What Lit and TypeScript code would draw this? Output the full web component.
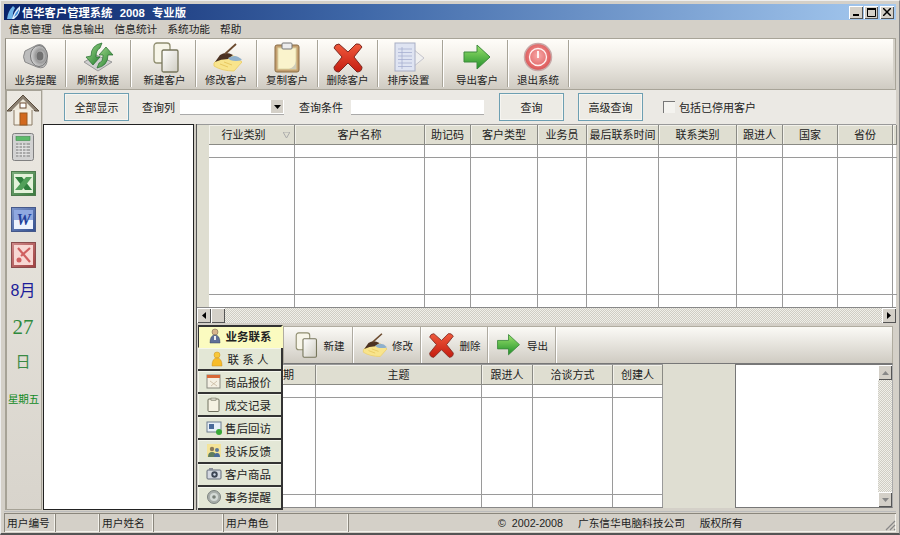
import { LitElement, html, css, svg } from "lit";
import { customElement } from "lit/decorators.js";

const grad = (id: string, a: string, b: string) => svg`<defs><linearGradient id=${id} x1="0" y1="0" x2="1" y2="1"><stop offset="0" stop-color=${a}/><stop offset="1" stop-color=${b}/></linearGradient></defs>`;

const icons: Record<string, any> = {
  speaker: svg`<defs><radialGradient id="sp" cx=".6" cy=".5" r=".6"><stop offset="0" stop-color="#f4f4f4"/><stop offset=".5" stop-color="#9a9a9a"/><stop offset="1" stop-color="#dcdcdc"/></radialGradient></defs>
    <path d="M5 9 L17 3 Q24 1 26 9 L27 20 Q25 28 17 25 L5 20 Q2 15 5 9Z" fill="#bdbdbd" stroke="#8a8a8a"/><ellipse cx="19" cy="14" rx="8.500" ry="10.500" fill="url(#sp)" stroke="#777"/><ellipse cx="20" cy="14" rx="3.500" ry="4.500" fill="#707070"/>`,
  refresh: svg`${grad("rf", "#a4dc8e", "#1e7a2a")}<path d="M2 20 L14 13 L30 20 L16 29Z" fill="#cfcfcf" stroke="#999"/><path d="M9 14 Q9 3 20 1 L18 6 Q14 8 14 15 L18 15 L11 23 L4 15Z" fill="url(#rf)" stroke="#236b2c" stroke-width=".7"/><path d="M26 13 Q26 24 15 26 L17 21 Q21 20 21 13 L17 13 L24 5 L31 13Z" fill="url(#rf)" stroke="#236b2c" stroke-width=".7"/>`,
  doc: svg`${grad("dc", "#ffffff", "#cfcdc2")}<rect x="5" y="1" width="16" height="20" rx="3" fill="#f7f5e8" stroke="#8f8d6f" stroke-width="1.300"/><rect x="13" y="8" width="16" height="22" rx="1.500" fill="url(#dc)" stroke="#77765c" stroke-width="1.300"/>`,
  edit: svg`<g transform="translate(2 0)"><path d="M2 21 L9 14 L22 14 L30 20 L22 29 Q10 29 2 24Z" fill="#f8e48c" stroke="#ecd070"/><path d="M8 22l8 3M12 20l8 3" stroke="#e8c860" fill="none"/><path d="M3 20 L8 13 Q14 9 21 13 L16 17 Q9 17 3 20Z" fill="#4c3222"/><path d="M13 12 L24 2" stroke="#6b4a2e" stroke-width="1.800"/><path d="M16 16 Q24 11 30 18 Q24 20 18 18Z" fill="#8fb0cc"/></g>`,
  clip: svg`<rect x="4" y="3" width="24" height="27" rx="2" fill="#c4a070" stroke="#8a6c44"/><rect x="7" y="6" width="18" height="21" fill="#faf3cc" stroke="#e0d8a8"/><rect x="11" y="1" width="10" height="6" rx="1" fill="#ececec" stroke="#777"/><path d="M18 27 Q24 25 25 19 L25 27Z" fill="#cfcdb8"/>`,
  del: svg`<defs><linearGradient id="dl" x1="0" y1="0" x2="0" y2="1"><stop offset="0" stop-color="#f05a3c"/><stop offset="1" stop-color="#c41c10"/></linearGradient></defs><path d="M7 2 L16 10 L24 2 Q28 1 30 5 L22 15 L30 25 Q30 30 25 30 L16 21 L7 30 Q2 30 2 25 L10 15 L2 6 Q3 2 7 2Z" fill="url(#dl)" stroke="#7c2a22"/>`,
  sort: svg`<path d="M20 7 L31 16 L20 25Z" fill="#f0f0f0" stroke="#c4c4cc"/><rect x="2" y="1" width="20" height="28" fill="#dfe4f2" stroke="#a8aec4"/><path d="M5 7H19M5 10.500H19M5 14H19M5 17.500H19M5 21H19M5 24.500H19M9 5V27" stroke="#a6aed0" stroke-width=".8"/>`,
  arrow: svg`<defs><linearGradient id="ar" x1="0" y1="0" x2="0" y2="1"><stop offset="0" stop-color="#9be36c"/><stop offset="1" stop-color="#1f8f2a"/></linearGradient></defs><path d="M3 10 H16 V3 L29 15 L16 27 V20 H3Z" fill="url(#ar)" stroke="#3c8a3c"/>`,
  exit: svg`<defs><radialGradient id="ex" cx=".5" cy=".45" r=".6"><stop offset="0" stop-color="#f8a8a8"/><stop offset="1" stop-color="#d84c4c"/></radialGradient></defs><circle cx="16" cy="15" r="13.500" fill="url(#ex)" stroke="#c8a8a8" stroke-width="1.500"/><circle cx="16" cy="15" r="8.500" fill="none" stroke="#fff2f2" stroke-width="1.300"/><path d="M16 9 V16" stroke="#fff2f2" stroke-width="2"/>`,
  house: svg`<path d="M8 16 H26 V32 H8Z" fill="#f4efe4" stroke="#8a7a65"/><path d="M1 18 L17 2 L33 18 L29 18 L17 7 L5 18Z" fill="#8a7f70" stroke="#5a4c3c"/><path d="M17 6 L28 17 H6Z" fill="#ece6d8"/><rect x="14" y="10" width="6" height="5" fill="#fff" stroke="#6b4a30"/><rect x="14" y="20" width="7" height="12" fill="#d2691e" stroke="#9a5a20"/>`,
  calc: svg`<rect x="1.500" y=".5" width="21" height="27" rx="2" fill="#d2d2d2" stroke="#808080"/><rect x="5" y="3.500" width="14" height="4" fill="#5dbb6a" stroke="#3e8a4c" stroke-width=".6"/><path d="M5 10H19V24H5Z" fill="#a8a8a8"/><path d="M5 12.500H19M5 15.500H19M5 18.500H19M5 21.500H19M8 10V24M11.500 10V24M15 10V24" stroke="#e4e4e4" stroke-width=".9"/>`,
  excel: svg`<defs><linearGradient id="xl" x1="0" y1="0" x2="1" y2="1"><stop offset="0" stop-color="#7cae7c"/><stop offset="1" stop-color="#3c7a40"/></linearGradient></defs><rect x=".5" y=".5" width="24" height="24" fill="url(#xl)" stroke="#4c7a4c"/><rect x="3" y="3" width="19" height="19" fill="#e4f2da"/><path d="M4 6 H11 L21 19 H14Z" fill="#2f7f3e"/><path d="M21 6 H15 L4 19 H11Z" fill="#52a05a"/>`,
  word: svg`<defs><linearGradient id="wd" x1="0" y1="0" x2="1" y2="1"><stop offset="0" stop-color="#7f97cc"/><stop offset="1" stop-color="#34508f"/></linearGradient></defs><rect x=".5" y=".5" width="24" height="24" fill="url(#wd)" stroke="#46598a"/><rect x="3" y="3" width="19" height="19" fill="#eef3fd"/><path d="M3 3 H22 V13 H3Z" fill="#8fa8e0"/><text x="12.500" y="18" text-anchor="middle" font-size="16" font-weight="bold" font-style="italic" font-family="Liberation Serif, serif" fill="#23409a">W</text>`,
  ppt: svg`<defs><linearGradient id="pp" x1="0" y1="0" x2="1" y2="1"><stop offset="0" stop-color="#d08a8a"/><stop offset="1" stop-color="#a04040"/></linearGradient></defs><rect x=".5" y=".5" width="24" height="25" fill="url(#pp)" stroke="#8a4c4c"/><rect x="3" y="3" width="19" height="20" fill="#f8d8d4"/><path d="M7 6 L19 20 M19 6 L10 14" stroke="#d06060" stroke-width="2.200"/><circle cx="8" cy="18" r="2.500" fill="#d06060"/>`,
  person: svg`<circle cx="8" cy="4" r="3" fill="#d8b48c" stroke="#6b5a45" stroke-width=".5"/><path d="M3 15 Q3 7 8 7 Q13 7 13 15Z" fill="#5f6f98" stroke="#3a4460" stroke-width=".5"/><path d="M7 8h2v4H7z" fill="#eee"/>`,
  yellow: svg`<circle cx="8" cy="4" r="3" fill="#f8c83c" stroke="#c89020" stroke-width=".5"/><path d="M3 15 Q3 7 8 7 Q13 7 13 15Z" fill="#f8bc28" stroke="#c89020" stroke-width=".5"/>`,
  cal: svg`<rect x="1" y="1" width="13" height="13" fill="#f4f0e4" stroke="#8a8a80"/><rect x="1" y="1" width="13" height="3" fill="#d86838"/><path d="M4 7l7 5M11 7l-6 5" stroke="#c8b8a0" stroke-width=".8"/>`,
  board: svg`<rect x="2" y="2" width="11" height="12.500" rx="1" fill="#f5f2e2" stroke="#70705e"/><rect x="5" y="1" width="5" height="2.500" fill="#cfcfc0" stroke="#70705e" stroke-width=".5"/>`,
  monitor: svg`<rect x="1" y="2" width="14" height="10" fill="#e8f0f8" stroke="#6f7f8f"/><rect x="3" y="4" width="5" height="5" fill="#4a6a9a"/><circle cx="13" cy="12" r="3" fill="#38a838"/>`,
  group: svg`<rect x="1" y="1" width="14" height="13" fill="#f4e498"/><circle cx="6" cy="6" r="2.200" fill="#8a7a58"/><path d="M2 14 Q2 9 6 9 Q10 9 10 14Z" fill="#5f7d5f"/><circle cx="11" cy="7" r="2" fill="#58789a"/><path d="M8 14 Q8 10 11 10 Q14 10 14 14Z" fill="#4a6c9a"/>`,
  camera: svg`<rect x="1" y="4" width="14" height="9" rx="1" fill="#d4d8e0" stroke="#646c7a"/><rect x="3" y="2" width="4" height="2" fill="#8a8f9a"/><circle cx="8.500" cy="8.500" r="3.200" fill="#3c4454"/><circle cx="8.500" cy="8.500" r="1.200" fill="#cfd8e8"/>`,
  disc: svg`<circle cx="8" cy="8" r="6.500" fill="#a8aeaa" stroke="#7d8480"/><circle cx="8" cy="8" r="4" fill="#d4dad6"/><circle cx="8" cy="8" r="1.800" fill="#788078"/>`,
  logo: svg`<path d="M1 14 Q2 6 7 1 L9 3 Q6 8 7 14Z" fill="#6fb4e8"/><path d="M6 14 Q8 6 14 1 Q15 9 8 14Z" fill="#dff0fc"/><path d="M8 12 Q10 7 13 4 Q13 9 8 12Z" fill="#3f8ad8"/>`,
};

const ic = (name: string, w: number, h: number, vw = w, vh = h) =>
  html`<svg class="ic" width=${w} height=${h} viewBox="0 0 ${vw} ${vh}">${icons[name]}</svg>`;

const mainBtns: [string, string, number, number][] = [
  ["speaker", "业务提醒", 60, 0], ["refresh", "刷新数据", 65, 0], ["doc", "新建客户", 65, 3], ["edit", "修改客户", 61, 0],
  ["clip", "复制客户", 61, 0], ["del", "删除客户", 60, 0], ["sort", "排序设置", 65, -3], ["arrow", "导出客户", 65, 4], ["exit", "退出系统", 61, 0],
];
const menus = ["信息管理", "信息输出", "信息统计", "系统功能", "帮助"];
const grid1 = ["行业类别", "客户名称", "助记码", "客户类型", "业务员", "最后联系时间", "联系类别", "跟进人", "国家", "省份"];
const grid2 = ["期", "主题", "跟进人", "洽谈方式", "创建人"];
const tabs: [string, string][] = [
  ["person", "业务联系"], ["yellow", "联 系 人"], ["cal", "商品报价"], ["board", "成交记录"],
  ["monitor", "售后回访"], ["group", "投诉反馈"], ["camera", "客户商品"], ["disc", "事务提醒"],
];
const sub: [string, string, number][] = [["doc", "新建", 69], ["edit", "修改", 68], ["del", "删除", 67], ["arrow", "导出", 68]];

@customElement("app-root")
export class AppRoot extends LitElement {
  static styles = css`
    :host { display: block; width: 900px; height: 535px; overflow: hidden; }
    * { box-sizing: border-box; }
    .win { width: 900px; height: 535px; background: #d4d0c8; padding: 3px 3px 1px 3px; display: flex; flex-direction: column;
      font: 11px "Liberation Sans", "Noto Sans CJK SC", sans-serif; color: #222; border-right: 1px solid #888; border-bottom: 2px solid #555; border-top: 1px solid #eee; border-left: 1px solid #eee; }
    .ic { display: block; flex: none; }
    .title { height: 16px; flex: none; background: linear-gradient(90deg, #0a246a 0%, #3f68a8 40%, #a6caf0 100%); color: #fff; font-weight: 700; font-size: 11.300px; display: flex; align-items: center; padding-left: 2px; gap: 1px; white-space: pre; word-spacing: .5px; }
    .wbtns { margin-left: auto; display: flex; padding-right: 2px; }
    .wb { width: 14px; height: 13px; margin-left: 1px; background: #d4d0c8; box-shadow: inset 1px 1px #fff, inset -1px -1px #555; display: flex; align-items: center; justify-content: center; }
    .wb:last-child { margin-left: 2px; }
    .menu { height: 17px; flex: none; display: flex; align-items: center; padding-left: 5px; gap: 10px; font-size: 10.700px; }
    .tb { height: 52px; flex: none; margin: 1px 0 0 1px; border: 1px solid #a8a498; border-left-color: #8f8b80; background: linear-gradient(#fffdf9 0%, #f3f0ea 35%, #cfcbc2 100%); display: flex; padding: 1px 0 0 0; box-shadow: inset -2px 0 #d4d0c8; }
    .tbtn { display: flex; flex-direction: column; align-items: center; justify-content: space-between; padding: 2px 0 1px; border-right: 1px solid #a8a498; box-shadow: 1px 0 #fff; height: 47px; font-size: 10.500px; line-height: 12px; }
    .w { flex: 1; display: flex; min-height: 0; }
    .rail { width: 37px; flex: none; margin-left: 1px; border: 1px solid #a6a296; border-left-width: 2px; background: linear-gradient(#ece9e2, #d8d4cc); display: flex; flex-direction: column; align-items: center; padding: 2px 2px 0 0; }
    .rail .r2 { margin-top: 7px; }
    .rail .r3 { margin-top: 10px; }
    .rail .r4 { margin-top: 11px; }
    .rail .r5 { margin-top: 10px; }
    .m { font-size: 16px; line-height: 18px; color: #1c1c98; margin-top: 14px; }
    .d { font: 21px/24px "Liberation Serif", serif; color: #2f8a3c; margin-top: 15px; }
    .day { font-size: 15px; line-height: 18px; color: #3a8a44; margin-top: 14px; }
    .wk { font-size: 10.500px; line-height: 14px; color: #118a1e; margin-top: 21px; white-space: nowrap; letter-spacing: -.2px; margin-left: 1px;}
    .main { flex: 1; min-width: 0; margin-left: 1px; display: flex; flex-direction: column; }
    .search { height: 34px; flex: none; background: #ebe9e4; display: flex; align-items: center; padding: 3px 0 3px 21px; }
    .sbtn { height: 28px; border: 1px solid #6d9fb2; background: #edebe5; box-shadow: inset 0 0 0 1px #f6f5f1; display: flex; align-items: center; justify-content: center; width: 65px; }
    .lbl1 { margin-left: 13px; width: 38px; }
    .combo { width: 104px; height: 15px; background: #fff; border-bottom: 1px solid #aaa; display: flex; justify-content: flex-end; align-items: center; padding-right: 1px; }
    .arr { width: 12px; height: 13px; background: #d4d0c8; display: flex; align-items: center; justify-content: center; }
    .lbl2 { margin-left: 15px; width: 52px; }
    .inp { width: 133px; height: 15px; background: #fff; border-bottom: 1px solid #aaa; }
    .sbtn.q { margin-left: 15px; }
    .sbtn.q2 { margin-left: 14px; }
    .chk { width: 12px; height: 12px; margin-left: 20px; background: #f4f3ef; box-shadow: inset 1px 1px #777; }
    .chkl { margin-left: 4px; }
    .content { flex: 1; display: flex; min-height: 0; }
    .tree { width: 151px; flex: none; background: #fff; border: 1.500px solid #222; border-bottom-width: 1px; }
    .split { width: 3px; flex: none; background: #cfcbc2; border-right: 1px solid #555; }
    .right { flex: 1; min-width: 0; display: flex; flex-direction: column; }
    .g1 { height: 184px; flex: none; background: #fff; display: grid; grid-template-columns: 12px 86px 130px 46px 67px 49px 72px 78px 46px 55px 55px 4px; grid-template-rows: 20px 13px 1fr 12px; border-top: 1px solid #999; border-bottom: 1px solid #888; }
    .c { border-right: 1px solid #9a9a9a; border-bottom: 1px solid #9a9a9a; background: #fff; }
    .c.last { border-bottom: 0; }
    .x { border-bottom: 1px solid #9a9a9a; }
    .x.last { border-bottom: 0; }
    .h { background: #dfded1; display: flex; align-items: center; justify-content: center; padding-bottom: 2px; border-right: 1px solid #8a8a84; border-bottom: 1px solid #8a8a84; white-space: nowrap; overflow: hidden; box-shadow: inset 1px 1px #f2f1ea; position: relative; }
    .h.sorted { padding-right: 16px; }
    .h.clip { justify-content: flex-start; }
    .sel { background: #dfded1; }
    .tri { position: absolute; right: 4px; top: 7px; }
    .hs { height: 15px; flex: none; display: flex; justify-content: space-between; background: repeating-conic-gradient(#f0efe9 0 25%, #cfcdc4 0 50%) 0 0 / 2px 2px; }
    .sb { width: 14px; height: 15px; background: #d4d0c8; box-shadow: inset 1px 1px #fff, inset -1px -1px #555; display: flex; align-items: center; justify-content: center; flex: none; }
    .lh { display: flex; }
    .lower { flex: 1; min-height: 0; display: flex; margin-top: 3px; padding-left: 1px; }
    .tabs { width: 85px; flex: none; display: flex; flex-direction: column; margin-top: -1px; }
    .tab { height: 23.100px; flex: none; background: #e3e7d6; border-right: 2px solid #333; border-bottom: 2px solid #333; display: flex; align-items: center; justify-content: center; gap: 3px; font-size: 11.500px; padding-right: 2px; box-shadow: inset 1px 1px #f4f6ec; }
    .tab.on { background: #fbfbc0; font-weight: 700; padding-bottom: 2px; border-right-color: #fbfbc0; border-top: 2px solid #333; border-left: 1px solid #333; border-bottom: 1px solid #fbfbc0; box-shadow: none; }
    .rp { flex: 1; min-width: 0; display: flex; flex-direction: column; }
    .stb { height: 38px; flex: none; margin-right: 3px; background: linear-gradient(#fbfaf6, #cfcbc2); border: 1px solid #b0aca0; border-bottom-color: #777; display: flex; }
    .sbt { display: flex; align-items: center; justify-content: center; gap: 5px; border-right: 1px solid #aeaaa0; box-shadow: 1px 0 #fff; font-size: 10.500px; }
    .lr { flex: 1; min-height: 0; display: flex; margin-bottom: 2px; }
    .g2 { width: 380px; flex: none; background: #fff; display: grid; grid-template-columns: 33px 166px 51px 80px 50px; grid-template-rows: 20px 13px 1fr 12px; border-top: 1px solid #999; border-bottom: 1px solid #888; }
    .gap { width: 72px; flex: none; background: #dfded2; }
    .memo { width: 158px; flex: none; background: #fff; border: 1px solid #777; border-right: 1px solid #aaa; display: flex; justify-content: flex-end; }
    .vs { width: 14px; display: flex; flex-direction: column; justify-content: space-between; background: repeating-conic-gradient(#f0efe9 0 25%, #cfcdc4 0 50%) 0 0 / 2px 2px; }
    .status { height: 21px; flex: none; display: flex; padding-top: 1px; border-top: 1px solid #bbb; margin-top: 1px; position: relative; font-size: 10.700px; }
    .p { height: 19px; box-shadow: inset 1px 1px #8a867c, inset -1px -1px #f4f2ec; display: flex; align-items: center; padding-left: 3px; flex: none; white-space: pre; }
    .p.long { flex: 1; padding-left: 150px; gap: 15px; }
    .grip { position: absolute; right: 0; bottom: 1px; }
  `;

  private gridCells(heads: string[], extra: boolean, sel: boolean) {
    return html`
      ${sel ? html`<div class="sel"></div>` : ""}
      ${heads.map((h, i) => html`<div class="h ${i === 0 ? (sel ? "sorted" : "clip") : ""}">${h}${i === 0 && sel ? html`<svg class="tri" width="7" height="6" viewBox="0 0 7 6"><path d="M0 0H7L3.500 6Z" fill="none" stroke="#aaa"/></svg>` : ""}</div>`)}
      ${extra ? html`<div class="h"></div>` : ""}
      ${[0, 1, 2].map((r) => html`
        ${sel ? html`<div class="sel"></div>` : ""}
        ${heads.map(() => html`<div class="c ${r === 2 ? "last" : ""}"></div>`)}
        ${extra ? html`<div class="x ${r === 2 ? "last" : ""}"></div>` : ""}
      `)}
    `;
  }

  render() {
    return html`<div class="win">
      <div class="title">${ic("logo", 15, 15)}<span>信华客户管理系统  2008  专业版</span>
        <div class="wbtns">
          <div class="wb"><svg width="7" height="7"><path d="M0 6H6" stroke="#000" stroke-width="2"/></svg></div>
          <div class="wb"><svg width="9" height="9"><path d="M.5 1.500H8.500V8.500H.5Z" fill="none" stroke="#000"/><path d="M0 1H9" stroke="#000" stroke-width="2"/></svg></div>
          <div class="wb"><svg width="8" height="8"><path d="M0 0L8 8M8 0L0 8" stroke="#000" stroke-width="1.500"/></svg></div>
        </div>
      </div>
      <div class="menu">${menus.map((m) => html`<span>${m}</span>`)}</div>
      <div class="tb">
        ${mainBtns.map(([i, t, w, dx]) => html`<div class="tbtn" style="width:${w}px;padding-left:${Math.max(dx, 0)}px;padding-right:${Math.max(-dx, 0)}px">${ic(i, 32, 32)}<span>${t}</span></div>`)}
      </div>
      <div class="w">
        <div class="rail">
          ${ic("house", 34, 33)}
          <div class="r2">${ic("calc", 24, 28)}</div>
          <div class="r3">${ic("excel", 25, 25)}</div>
          <div class="r4">${ic("word", 25, 25)}</div>
          <div class="r5">${ic("ppt", 25, 26)}</div>
          <div class="m">8月</div>
          <div class="d">27</div>
          <div class="day">日</div>
          <div class="wk">星期五</div>
        </div>
        <div class="main">
          <div class="search">
            <div class="sbtn">全部显示</div>
            <span class="lbl1">查询列</span>
            <div class="combo"><div class="arr"><svg width="7" height="4"><path d="M0 0H7L3.500 4Z" fill="#000"/></svg></div></div>
            <span class="lbl2">查询条件</span>
            <div class="inp"></div>
            <div class="sbtn q">查询</div>
            <div class="sbtn q2">高级查询</div>
            <div class="chk"></div>
            <span class="chkl">包括已停用客户</span>
          </div>
          <div class="content">
            <div class="tree"></div>
            <div class="split"></div>
            <div class="right">
              <div class="g1">${this.gridCells(grid1, true, true)}</div>
              <div class="hs">
                <div class="lh"><div class="sb"><svg width="4" height="7"><path d="M4 0V7L0 3.500Z" fill="#000"/></svg></div><div class="sb"></div></div>
                <div class="sb"><svg width="4" height="7"><path d="M0 0V7L4 3.500Z" fill="#000"/></svg></div>
              </div>
              <div class="lower">
                <div class="tabs">
                  ${tabs.map(([i, t], k) => html`<div class="tab ${k === 0 ? "on" : ""}">${ic(i, 16, 16)}<span>${t}</span></div>`)}
                </div>
                <div class="rp">
                  <div class="stb">
                    ${sub.map(([i, t, w]) => html`<div class="sbt" style="width:${w}px">${ic(i, 27, 27, 32, 32)}<span>${t}</span></div>`)}
                  </div>
                  <div class="lr">
                    <div class="g2">${this.gridCells(grid2, false, false)}</div>
                    <div class="gap"></div>
                    <div class="memo"><div class="vs">
                      <div class="sb"><svg width="7" height="4"><path d="M0 4H7L3.500 0Z" fill="#888"/></svg></div>
                      <div class="sb"><svg width="7" height="4"><path d="M0 0H7L3.500 4Z" fill="#888"/></svg></div>
                    </div></div>
                  </div>
                </div>
              </div>
            </div>
          </div>
        </div>
      </div>
      <div class="status">
        <div class="p" style="width:51px">用户编号</div>
        <div class="p" style="width:44px"></div>
        <div class="p" style="width:54px">用户姓名</div>
        <div class="p" style="width:70px"></div>
        <div class="p" style="width:54px">用户角色</div>
        <div class="p" style="width:71px"></div>
        <div class="p long"><span>©  2002-2008</span><span>广东信华电脑科技公司</span><span>版权所有</span></div>
        <svg class="grip" width="12" height="12"><path d="M11 2L2 11M11 6L6 11M11 10L10 11" stroke="#888" stroke-width="1.200"/></svg>
      </div>
    </div>`;
  }
}
